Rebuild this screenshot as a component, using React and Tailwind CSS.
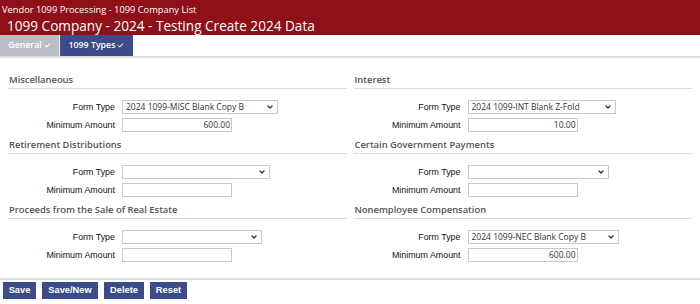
import React from "react";
import { ChevronDown, Check } from "lucide-react";

// ─── data ────────────────────────────────────────────────────────────────────
const SECTIONS = [
  { title: "Miscellaneous", form: "2024 1099-MISC Blank Copy B", amount: "600.00", selectW: "w-[156px]" },
  { title: "Interest", form: "2024 1099-INT Blank Z-Fold", amount: "10.00", selectW: "w-[148px]" },
  { title: "Retirement Distributions", form: "", amount: "", selectW: "w-[148px]" },
  { title: "Certain Government Payments", form: "", amount: "", selectW: "w-[141px]" },
  { title: "Proceeds from the Sale of Real Estate", form: "", amount: "", selectW: "w-[140px]" },
  { title: "Nonemployee Compensation", form: "2024 1099-NEC Blank Copy B", amount: "600.00", selectW: "w-[151px]" },
];

const BUTTONS = [
  { label: "Save", w: "w-[33px]" },
  { label: "Save/New", w: "w-[56px]" },
  { label: "Delete", w: "w-[40px]" },
  { label: "Reset", w: "w-[37px]" },
];

// ─── pieces ──────────────────────────────────────────────────────────────────
function Section({ title, form, amount, selectW }) {
  return (
    <div className="pb-[5px]">
      <div className="text-[9.4px] leading-[16px] font-semibold text-[#555] border-b border-[#dcdcdc] pl-[1px]">
        {title}
      </div>

      <div className="pt-[11px] flex flex-col gap-[4px] font-['Liberation_Sans',Arial,sans-serif] text-[8.9px] leading-[14px] text-[#111]">
        <div className="flex items-center gap-[7px] h-[14px]">
          <span className="w-[107px] text-right">Form Type</span>
          <div
            className={`${selectW} h-[14px] border border-[#c8c8c8] bg-white flex items-center justify-between pl-[3px] pr-[3px] font-['Open_Sans',sans-serif] text-[8.5px] text-[#333]`}
          >
            <span className="whitespace-nowrap leading-none">{form}</span>
            <ChevronDown size={8} strokeWidth={4} className="text-[#333] shrink-0" />
          </div>
        </div>
        <div className="flex items-center gap-[7px] h-[14px]">
          <span className="w-[107px] text-right">Minimum Amount</span>
          <div className="w-[110px] h-[14px] border border-[#c8c8c8] bg-white flex items-center justify-end pr-[1px] font-['Open_Sans',sans-serif] text-[8.5px] text-[#333] leading-none">
            {amount}
          </div>
        </div>
      </div>
    </div>
  );
}

// ─── page ────────────────────────────────────────────────────────────────────
export default function App() {
  return (
    <div className="w-[700px] h-[304px] bg-white overflow-hidden font-['Open_Sans',sans-serif]">
      {/* header */}
      <header className="bg-[#8f1018] text-white h-[35px] px-[2px] pt-[3px]">
        <div className="text-[9.3px] leading-[14px]">Vendor 1099 Processing - 1099 Company List</div>
        <div className="text-[13.6px] leading-[17px] pl-[5px]">1099 Company - 2024 - Testing Create 2024 Data</div>
      </header>

      {/* tabs */}
      <nav className="flex h-[21px] border-b-2 border-[#dedede] box-content">
        <div className="w-[59px] bg-[#b9bfc4] text-white text-[8.8px] font-semibold flex items-center justify-center gap-[2px]">
          General <Check size={7} strokeWidth={3.5} />
        </div>
        <div className="w-[73px] ml-[1px] bg-[#3d4c88] text-white text-[8.8px] font-semibold flex items-center justify-center gap-[2px]">
          1099 Types <Check size={7} strokeWidth={3.5} />
        </div>
      </nav>

      {/* form sections */}
      <main className="px-[8px] pt-[14px] grid grid-cols-2 gap-x-[7px]">
        {SECTIONS.map((s) => (
          <Section key={s.title} {...s} />
        ))}
      </main>

      {/* actions */}
      <footer className="mt-[11px] border-t-2 border-[#dedede] pt-[2px] pl-[3px] flex gap-[6px]">
        {BUTTONS.map((b) => (
          <button
            key={b.label}
            className={`${b.w} h-[17px] bg-[#3d4c88] text-white text-[9.3px] font-bold leading-none font-['Liberation_Sans',Arial,sans-serif] flex items-center justify-center`}
          >
            {b.label}
          </button>
        ))}
      </footer>
    </div>
  );
}
